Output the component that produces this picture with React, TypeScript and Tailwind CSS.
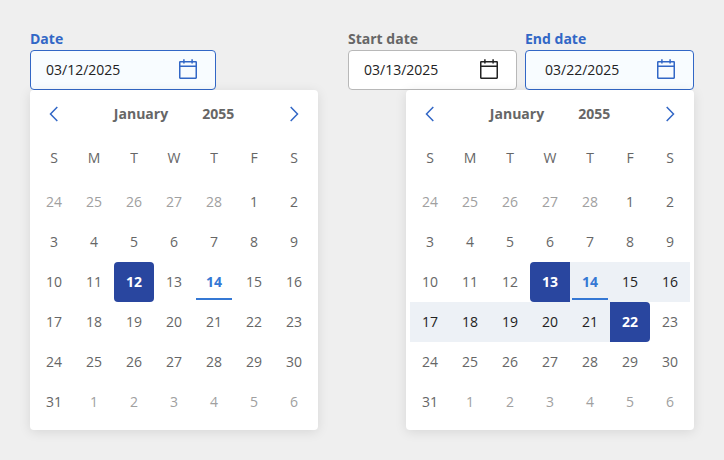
type Tone = "active" | "idle";

const WEEKDAYS = ["S", "M", "T", "W", "T", "F", "S"];

// Trailing days of the previous month, the month itself, leading days of the next one.
const CELLS = [
  ...[24, 25, 26, 27, 28].map((day) => ({ day, outside: true })),
  ...Array.from({ length: 31 }, (_, i) => ({ day: i + 1, outside: false })),
  ...[1, 2, 3, 4, 5, 6].map((day) => ({ day, outside: true })),
];

const TODAY = 14;

function CalendarIcon() {
  return (
    <svg className="block" width="20" height="22" viewBox="0 0 20 22" fill="none" stroke="currentColor" strokeWidth="1.5">
      <rect x="1.75" y="2.75" width="16.5" height="16.5" rx="0.4" />
      <path d="M1.75 7.25H18.25M5.9 0.3V4.6M14.1 0.3V4.6" />
    </svg>
  );
}

function Chevron({ direction }: { direction: "left" | "right" }) {
  return (
    <svg width="10" height="16" viewBox="0 0 10 16" fill="none" stroke="#3267c6" strokeWidth="1.5">
      <path d={direction === "left" ? "M8.3 1L1.5 8L8.3 15" : "M1.7 1L8.5 8L1.7 15"} />
    </svg>
  );
}

function DateField({ label, value, tone, className, padding }: { label: string; value: string; tone: Tone; className: string; padding: string }) {
  const active = tone === "active";
  return (
    <div className={className}>
      <div className={`h-[22px] text-sm leading-[22px] font-bold ${active ? "text-[#3267c6]" : "text-[#666666]"}`}>
        {label}
      </div>
      <div
        className={`flex h-10 items-center justify-between rounded border text-sm text-[#222222] ${
          active ? "border-[#3267c6] bg-[#f8fcff]" : "border-[#b8b8b8] bg-white"
        } ${padding}`}
      >
        <span>{value}</span>
        <span className={active ? "text-[#3267c6]" : "text-[#222222]"}>
          <CalendarIcon />
        </span>
      </div>
    </div>
  );
}

function Calendar({ start, end }: { start: number; end: number }) {
  const range = start !== end;
  return (
    <div className="relative h-[340px] w-72 rounded bg-white px-1 text-sm text-[#666666] shadow-[0_2px_12px_rgba(0,0,0,0.1)]">
      <div className="flex h-12 items-center justify-between px-[15px]">
        <Chevron direction="left" />
        <div className="flex flex-1 justify-center gap-[34px] font-bold">
          <span>January</span>
          <span>2055</span>
        </div>
        <Chevron direction="right" />
      </div>
      <div className="mb-1 grid grid-cols-7">
        {WEEKDAYS.map((name, i) => (
          <div key={i} className="flex h-10 items-center justify-center">
            {name}
          </div>
        ))}
      </div>
      <div className="grid grid-cols-7">
        {CELLS.map(({ day, outside }, i) => {
          let look = "";
          if (outside) look = "text-[#a0a0a0]";
          else if (day === start || day === end) {
            const corners = !range ? "rounded" : day === start ? "rounded-l" : "rounded-r";
            look = `bg-[#29469f] font-bold text-white ${corners}`;
          } else {
            if (day > start && day < end) look = "bg-[#edf1f6] text-[#222222]";
            if (day === TODAY) look = `${range ? "bg-[#edf1f6]" : ""} font-bold text-[#3578d4]`;
          }
          return (
            <div key={i} className={`relative flex h-10 items-center justify-center ${look}`}>
              {day}
              {!outside && day === TODAY && (
                <span className="absolute inset-x-0.5 bottom-0.5 h-0.5 bg-[#3578d4]" />
              )}
            </div>
          );
        })}
      </div>
    </div>
  );
}

export default function App() {
  return (
    <div className="flex h-[460px] w-[724px] justify-between bg-[#efefef] px-[30px] pt-7 font-['Open_Sans',sans-serif]">
      <section>
        <DateField label="Date" value="03/12/2025" tone="active" className="w-[186px]" padding="pr-[17px] pl-[15px]" />
        <Calendar start={12} end={12} />
      </section>
      <section className="flex flex-col items-end">
        <div className="flex gap-2">
          <DateField label="Start date" value="03/13/2025" tone="idle" className="w-[169px]" padding="pr-[17px] pl-[15px]" />
          <DateField label="End date" value="03/22/2025" tone="active" className="w-[169px]" padding="pr-[17px] pl-[19px]" />
        </div>
        <Calendar start={13} end={22} />
      </section>
    </div>
  );
}
